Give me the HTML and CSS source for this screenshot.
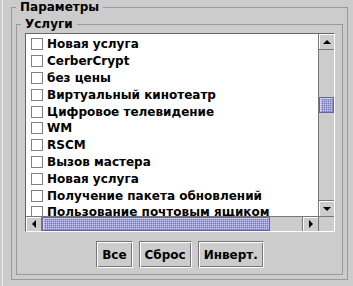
FILE: index.html
```html
<!DOCTYPE html>
<html lang="ru">
<head>
    <meta charset="UTF-8">
    <title>Параметры</title>
    <link rel="stylesheet" href="styles.css">
</head>
<body>
    <div class="frame">
        <fieldset class="group outer">
            <legend>Параметры</legend>

            <fieldset class="group inner">
                <legend>Услуги</legend>

                <!-- list of services with scrollbars -->
                <div class="scroll">
                    <div class="view">
                        <ul class="list">
                            <li><span class="check"></span>Новая услуга</li>
                            <li><span class="check"></span>CerberCrypt</li>
                            <li><span class="check"></span>без цены</li>
                            <li><span class="check"></span>Виртуальный кинотеатр</li>
                            <li><span class="check"></span>Цифровое телевидение</li>
                            <li><span class="check"></span>WM</li>
                            <li><span class="check"></span>RSCM</li>
                            <li><span class="check"></span>Вызов мастера</li>
                            <li><span class="check"></span>Новая услуга</li>
                            <li><span class="check"></span>Получение пакета обновлений</li>
                            <li><span class="check"></span>Пользование почтовым ящиком</li>
                        </ul>
                    </div>

                    <div class="vbar">
                        <div class="arrow up"><span class="tri tri-up"></span></div>
                        <div class="track"><div class="thumb vthumb"></div></div>
                        <div class="arrow down"><span class="tri tri-down"></span></div>
                    </div>

                    <div class="hbar">
                        <div class="arrow left"><span class="tri tri-left"></span></div>
                        <div class="track"><div class="thumb hthumb"></div></div>
                        <div class="arrow right"><span class="tri tri-right"></span></div>
                    </div>

                    <div class="corner"></div>
                </div>

                <div class="buttons">
                    <button class="btn">Все</button>
                    <button class="btn">Сброс</button>
                    <button class="btn">Инверт.</button>
                </div>
            </fieldset>
        </fieldset>
    </div>
</body>
</html>
```

FILE: styles.css
```css
* {
    box-sizing: border-box;
}

body {
    margin: 0;
    background-color: #cccccc;          /* Metal grey */
    font-family: "DejaVu Sans", sans-serif;
    font-size: 12px;
    font-weight: bold;
    color: #000;
}

.frame {
    height: 286px;
    margin-left: 2px;
    border-left: 1px solid #eeeeee;
    padding: 0 5px 0 8px;
}

/* titled borders */
.group {
    margin: 0;
    min-width: 0;
    border: 1px solid #999999;
}

.group legend {
    padding: 0 4px;
    line-height: 14px;
}

.outer {
    padding: 3px 4px 4px 4px;
}

.inner {
    padding: 2px 7px 6px 8px;
}

.inner legend {
    margin-left: -4px;
}

/* scroll pane */
.scroll {
    display: grid;
    grid-template-columns: 292px 16px;
    grid-template-rows: 182px 15px;
    border: 1px solid;
    border-color: #666666 #ffffff #ffffff #666666;
    background-color: #ffffff;
}

.view {
    overflow: hidden;
}

.list {
    list-style: none;
    margin: 0;
    padding: 2px 0 0 0;
}

.list li {
    display: flex;
    align-items: center;
    gap: 4px;
    height: 16.8px;
    padding-left: 5px;
    white-space: nowrap;
}

.check {
    flex: none;
    width: 12px;
    height: 12px;
    border: 1px solid #808080;
    background-color: #ffffff;
}

/* scrollbars */
.vbar {
    display: flex;
    flex-direction: column;
    background-color: #cccccc;
    border-left: 1px solid #777777;
}

.hbar {
    display: flex;
    background-color: #cccccc;
    border-top: 1px solid #777777;
}

.corner {
    background-color: #cccccc;
    border-top: 1px solid #777777;
    border-left: 1px solid #777777;
}

.track {
    flex: 1;
}

.arrow {
    flex: none;
    display: flex;
    align-items: center;
    justify-content: center;
    background-color: #cccccc;
    box-shadow: inset 1px 1px 0 #ffffff;
}

.vbar .arrow {
    height: 16px;
}

.hbar .arrow {
    width: 16px;
}

.up {
    border-bottom: 1px solid #777777;
}

.down {
    border-top: 1px solid #777777;
}

.left {
    border-right: 1px solid #777777;
}

.right {
    border-left: 1px solid #777777;
}

.tri {
    width: 0;
    height: 0;
    border: 4px solid transparent;
}

.tri-up {
    border-top: 0;
    border-bottom-color: #000;
}

.tri-down {
    border-bottom: 0;
    border-top-color: #000;
}

.tri-left {
    border-left: 0;
    border-right-color: #000;
}

.tri-right {
    border-right: 0;
    border-left-color: #000;
}

.thumb {
    border: 1px solid #666699;
    background-color: #9999cc;
    background-image: conic-gradient(#ccccff 25%, #9999cc 0 50%, #8080b8 0 75%, #9999cc 0);
    background-size: 2px 2px;
    box-shadow: inset 1px 1px 0 #ccccff;
}

.vthumb {
    margin-top: 47px;
    height: 16px;
}

.hthumb {
    width: 228px;
    height: 100%;
}

/* buttons row */
.buttons {
    display: flex;
    justify-content: center;
    gap: 6px;
    margin-top: 9px;
}

.btn {
    font: inherit;
    color: #000;
    height: 27px;
    padding: 0 5px;
    background-color: #cccccc;
    border: 1px solid;
    border-color: #777777 #ffffff #ffffff #777777;
    box-shadow: inset 1px 1px 0 #ffffff, inset -1px -1px 0 #777777;
}
```
